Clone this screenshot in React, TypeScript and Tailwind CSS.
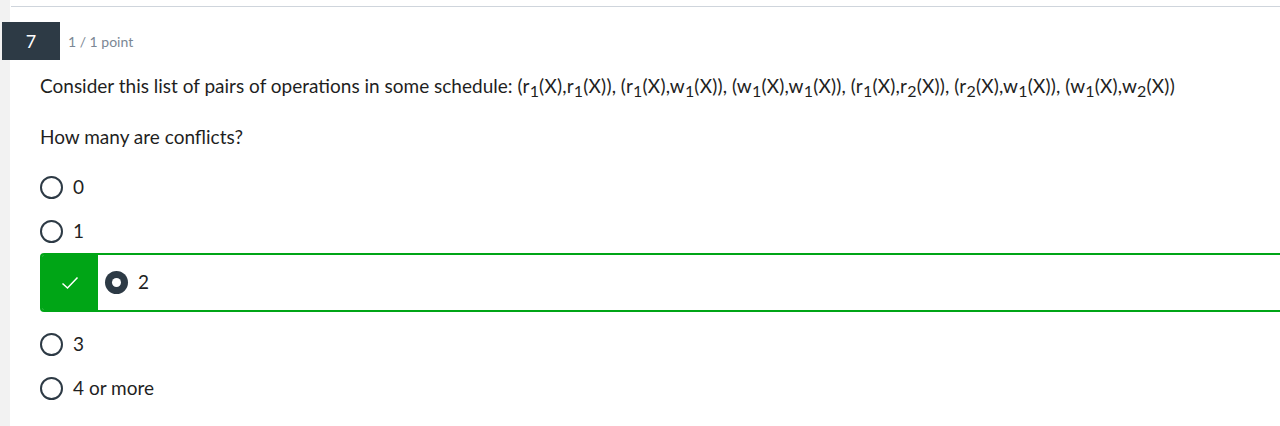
import React from "react";

const font = { fontFamily: "Lato, 'Open Sans', sans-serif" };

function Op({ op, i }: { op: string; i: string }) {
  return (
    <span>
      {op}
      <sub className="relative bottom-auto top-[4px] align-baseline text-[16px] leading-none">{i}</sub>
      (X)
    </span>
  );
}

function Pair({ a, b }: { a: [string, string]; b: [string, string] }) {
  return (
    <span className="tracking-[0.2px]">
      (<Op op={a[0]} i={a[1]} />,<Op op={b[0]} i={b[1]} />)
    </span>
  );
}

function Radio() {
  return <span className="h-[23px] w-[23px] shrink-0 rounded-full border-2 border-[#2d3a45] bg-white" />;
}

function Option({ label }: { label: string }) {
  return (
    <div className="flex h-[44px] items-center gap-[10px] pl-[40px]">
      <Radio />
      <span className="text-[19px] text-[#1f1f1f]">{label}</span>
    </div>
  );
}

export default function App() {
  const pairs: [[string, string], [string, string]][] = [
    [["r", "1"], ["r", "1"]],
    [["r", "1"], ["w", "1"]],
    [["w", "1"], ["w", "1"]],
    [["r", "1"], ["r", "2"]],
    [["r", "2"], ["w", "1"]],
    [["w", "1"], ["w", "2"]],
  ];

  return (
    <div
      className="min-h-[426px] w-full overflow-hidden bg-[linear-gradient(to_right,#f2f2f2_10px,#ffffff_10px)] pb-4"
      style={font}
    >
      <div className="ml-[11px] pt-[6px]">
        <div className="border-t border-[#cfd5dc]" />
      </div>

      <div className="ml-[2px] mt-[15px] flex items-center">
        <div className="flex h-[38px] w-[58px] items-center justify-center bg-[#2d3a45] text-[18px] text-white">
          7
        </div>
        <span className="ml-[8px] text-[14px] text-[#7b8794]">1 / 1 point</span>
      </div>

      <p className="mt-[14px] pl-[40px] text-[19px] leading-[24px] text-[#1f1f1f]">
        Consider this list of pairs of operations in some schedule:{" "}
        {pairs.map((p, idx) => (
          <React.Fragment key={idx}>
            <Pair a={p[0]} b={p[1]} />
            {idx < pairs.length - 1 ? ", " : ""}
          </React.Fragment>
        ))}
      </p>

      <p className="mt-[27px] pl-[40px] text-[19px] leading-[24px] text-[#1f1f1f]">How many are conflicts?</p>

      <div className="mt-[16px]">
        <Option label="0" />
        <Option label="1" />

        <div className="ml-[40px] flex h-[59px] overflow-hidden rounded-l-[4px] border-2 border-r-0 border-[#00a516]">
          <div className="flex w-[56px] items-center justify-center bg-[#00a516]">
            <svg width="18" height="14" viewBox="0 0 18 14" fill="none">
              <path d="M1.5 7.5 L6.5 12 L16.5 1.5" stroke="white" strokeWidth="1.5" />
            </svg>
          </div>
          <div className="flex items-center gap-[10px] pl-[7px]">
            <span className="flex h-[23px] w-[23px] items-center justify-center rounded-full bg-[#2d3a45]">
              <span className="h-[9px] w-[9px] rounded-full bg-white" />
            </span>
            <span className="text-[19px] text-[#1f1f1f]">2</span>
          </div>
        </div>

        <div className="mt-[10px]">
          <Option label="3" />
          <Option label="4 or more" />
        </div>
      </div>
    </div>
  );
}
